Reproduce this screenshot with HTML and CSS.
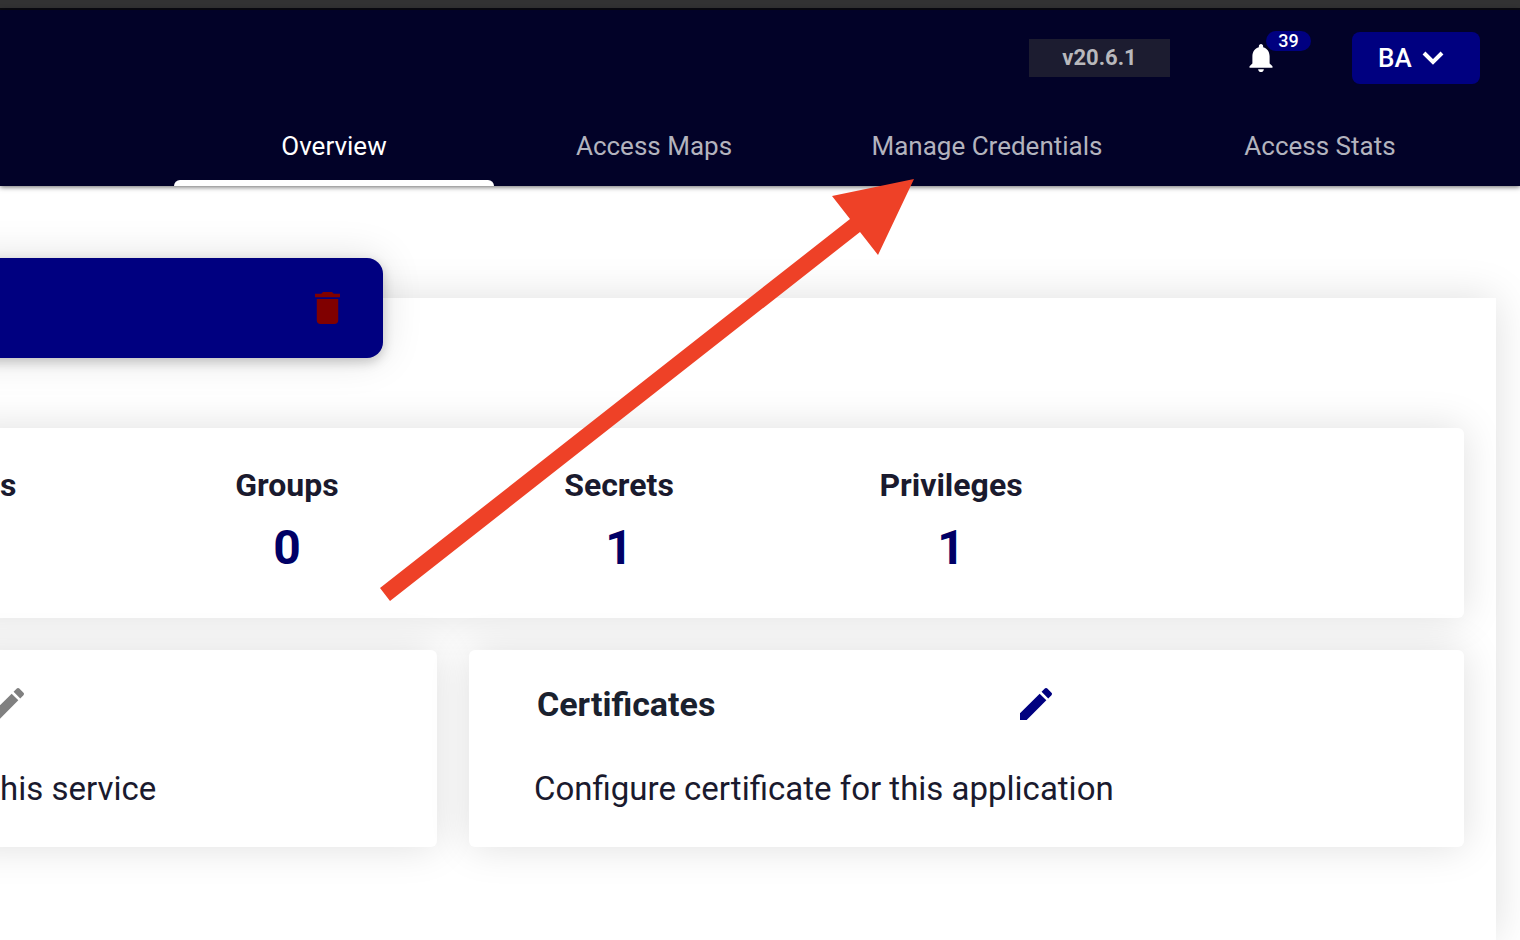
FILE: index.html
```html
<!DOCTYPE html>
<html lang="en">
<head>
<meta charset="utf-8">
<title>Application overview</title>
<link rel="stylesheet" href="styles.css">
</head>
<body>
<div class="window-edge"></div>
<header class="header">
  <div class="toolbar">
    <span class="version">v20.6.1</span>
    <button class="notifications" type="button" aria-label="Notifications">
      <svg class="bell" viewBox="4 2.5 16 19.5" aria-hidden="true"><path d="M12 22c1.1 0 2-.9 2-2h-4c0 1.1.89 2 2 2zm6-6v-5c0-3.07-1.64-5.64-4.5-6.32V4c0-.83-.67-1.5-1.5-1.5s-1.5.67-1.5 1.5v.68C7.63 5.36 6 7.92 6 11v5l-2 2v1h16v-1l-2-2z"/></svg>
      <span class="badge">39</span>
    </button>
    <button class="account" type="button">BA
      <svg class="chevron" viewBox="0 0 22 14" aria-hidden="true"><path d="M2 2l9 9 9-9"/></svg>
    </button>
  </div>
  <nav class="tabs">
    <a class="tab tab-active" href="#overview">Overview</a>
    <a class="tab" href="#maps">Access Maps</a>
    <a class="tab" href="#credentials">Manage Credentials</a>
    <a class="tab" href="#stats">Access Stats</a>
  </nav>
</header>
<main class="main">
  <section class="panel">
    <div class="title-bar">
      <button class="icon-button" type="button" aria-label="Delete">
        <svg class="trash" viewBox="5 3 14 18" preserveAspectRatio="none" aria-hidden="true"><path d="M6 19c0 1.1.9 2 2 2h8c1.1 0 2-.9 2-2V7H6v12zM19 4h-3.5l-1-1h-5l-1 1H5v2h14V4z"/></svg>
      </button>
    </div>
    <div class="cards">
      <div class="card stats">
        <div class="stat stat-cut"><h2 class="stat-label">s</h2></div>
        <div class="stat"><h2 class="stat-label">Groups</h2><p class="stat-value">0</p></div>
        <div class="stat"><h2 class="stat-label">Secrets</h2><p class="stat-value">1</p></div>
        <div class="stat"><h2 class="stat-label">Privileges</h2><p class="stat-value">1</p></div>
      </div>
      <div class="card service">
        <div class="card-head">
          <button class="icon-button" type="button" aria-label="Edit service">
            <svg class="pencil-cut" viewBox="7.5 3 13.5 18" aria-hidden="true"><path d="M3 17.25V21h3.75L17.81 9.94l-3.75-3.75L3 17.25zM20.71 7.04c.39-.39.39-1.02 0-1.41l-2.34-2.34c-.39-.39-1.02-.39-1.41 0l-1.83 1.83 3.75 3.75 1.83-1.83z"/></svg>
          </button>
        </div>
        <p class="card-text">his service</p>
      </div>
      <div class="card certificates">
        <div class="card-head">
          <h2 class="card-title">Certificates</h2>
          <button class="icon-button" type="button" aria-label="Edit certificates">
            <svg class="pencil" viewBox="3 3 18 18" aria-hidden="true"><path d="M3 17.25V21h3.75L17.81 9.94l-3.75-3.75L3 17.25zM20.71 7.04c.39-.39.39-1.02 0-1.41l-2.34-2.34c-.39-.39-1.02-.39-1.41 0l-1.83 1.83 3.75 3.75 1.83-1.83z"/></svg>
          </button>
        </div>
        <p class="card-text">Configure certificate for this application</p>
      </div>
    </div>
  </section>
</main>
<svg class="pointer" viewBox="0 0 534 422" aria-hidden="true"><path d="M0 409L470 40L452 17L534 0L498 76L480 53L10 422z"/></svg>
</body>
</html>
```

FILE: styles.css
```css
* {
  box-sizing: border-box;
}

body {
  margin: 0;
  min-height: 100vh;
  display: flex;
  flex-direction: column;
  overflow: hidden;
  position: relative;
  background: #fff;
  color: #1a1a2e;
  font-family: Roboto, "Liberation Sans", sans-serif;
}

h2,
p {
  margin: 0;
}

button {
  border: 0;
  padding: 0;
  background: none;
  color: inherit;
  font: inherit;
  cursor: pointer;
}

svg {
  display: block;
  fill: currentColor;
}

.window-edge {
  height: 10px;
  background: #323233;
  border-bottom: 2px solid #0a0a12;
}

.header {
  position: relative;
  background: #020228;
  box-shadow: 0 1px 5px rgba(0, 0, 0, 0.6);
  padding: 22px 40px 0 0;
}

.toolbar {
  display: flex;
  justify-content: flex-end;
  align-items: center;
  height: 52px;
}

.version {
  width: 141px;
  background: #1c1c30;
  color: #b8b8bc;
  font-size: 22px;
  font-weight: 700;
  line-height: 38px;
  text-align: center;
}

.notifications {
  position: relative;
  margin: 0 79px;
  color: #fff;
}

.bell {
  width: 24px;
  height: 28px;
}

.badge {
  position: absolute;
  left: 17px;
  top: -13px;
  width: 45px;
  border-radius: 10px;
  background: #000080;
  font-size: 18px;
  font-weight: 500;
  line-height: 20px;
  text-align: center;
}

.account {
  display: flex;
  align-items: center;
  gap: 10px;
  width: 128px;
  height: 52px;
  padding-left: 26px;
  border-radius: 8px;
  background: #000080;
  color: #fff;
  font-size: 26px;
  font-weight: 500;
}

.chevron {
  width: 22px;
  height: 14px;
  fill: none;
  stroke: currentColor;
  stroke-width: 4;
}

.tabs {
  display: grid;
  grid-template-columns: 320px 320px 346px 320px;
  justify-content: end;
  margin-top: 22px;
}

.tab {
  position: relative;
  height: 80px;
  color: #b3b3be;
  font-size: 26px;
  line-height: 80px;
  text-align: center;
  text-decoration: none;
}

.tab-active {
  color: #fff;
}

.tab-active::after {
  content: "";
  position: absolute;
  left: 0;
  right: 0;
  bottom: 0;
  height: 6px;
  border-radius: 6px 6px 0 0;
  background: #fff;
}

.main {
  flex: 1;
  display: flex;
  padding: 112px 24px 0 0;
}

/* The panel and its cards run on past the left edge of the window. */
.panel {
  flex: 1;
  margin-left: -40px;
  padding-right: 32px;
  box-shadow: 0 0 40px rgba(0, 0, 0, 0.13);
}

.title-bar {
  display: flex;
  justify-content: flex-end;
  align-items: center;
  width: 423px;
  height: 100px;
  margin-top: -40px;
  padding-right: 43px;
  border-radius: 0 16px 16px 0;
  background: #000080;
  color: #800000;
  box-shadow: 0 0 40px rgba(0, 0, 0, 0.13), 0 4px 12px rgba(0, 0, 0, 0.2);
}

.trash {
  width: 25px;
  height: 32px;
}

.cards {
  display: grid;
  grid-template-columns: minmax(0, 477fr) minmax(0, 995fr);
  gap: 32px;
  margin-top: 70px;
}

.card {
  border-radius: 6px;
  background: #fff;
  box-shadow: 0 0 40px rgba(0, 0, 0, 0.13);
}

.stats {
  grid-column: 1 / -1;
  display: grid;
  grid-template-columns: 161fr 332fr 332fr 332fr 347fr;
  height: 190px;
  padding-top: 36px;
}

.stat {
  text-align: center;
}

.stat-cut {
  padding-left: 40px;
  text-align: left;
}

.stat-label {
  font-size: 32px;
  font-weight: 700;
  line-height: 42px;
}

.stat-value {
  margin-top: 12px;
  color: #000066;
  font-size: 48px;
  font-weight: 700;
  line-height: 60px;
}

.service,
.certificates {
  padding: 32px 0 36px 65px;
}

.service {
  padding-left: 40px;
}

.card-head {
  display: flex;
  justify-content: space-between;
  align-items: center;
  max-width: 518px;
  height: 44px;
  color: #000080;
}

.service .card-head {
  color: #808080;
}

.card-title {
  padding-left: 3px;
  color: #1a212e;
  font-size: 34px;
  font-weight: 700;
}

.pencil {
  width: 32px;
  height: 32px;
}

.pencil-cut {
  width: 24px;
  height: 32px;
}

.card-text {
  margin-top: 40px;
  font-size: 33px;
  line-height: 45px;
}

.pointer {
  position: absolute;
  left: 380px;
  top: 179px;
  width: 534px;
  height: 422px;
  color: #ee4127;
  pointer-events: none;
}
```
